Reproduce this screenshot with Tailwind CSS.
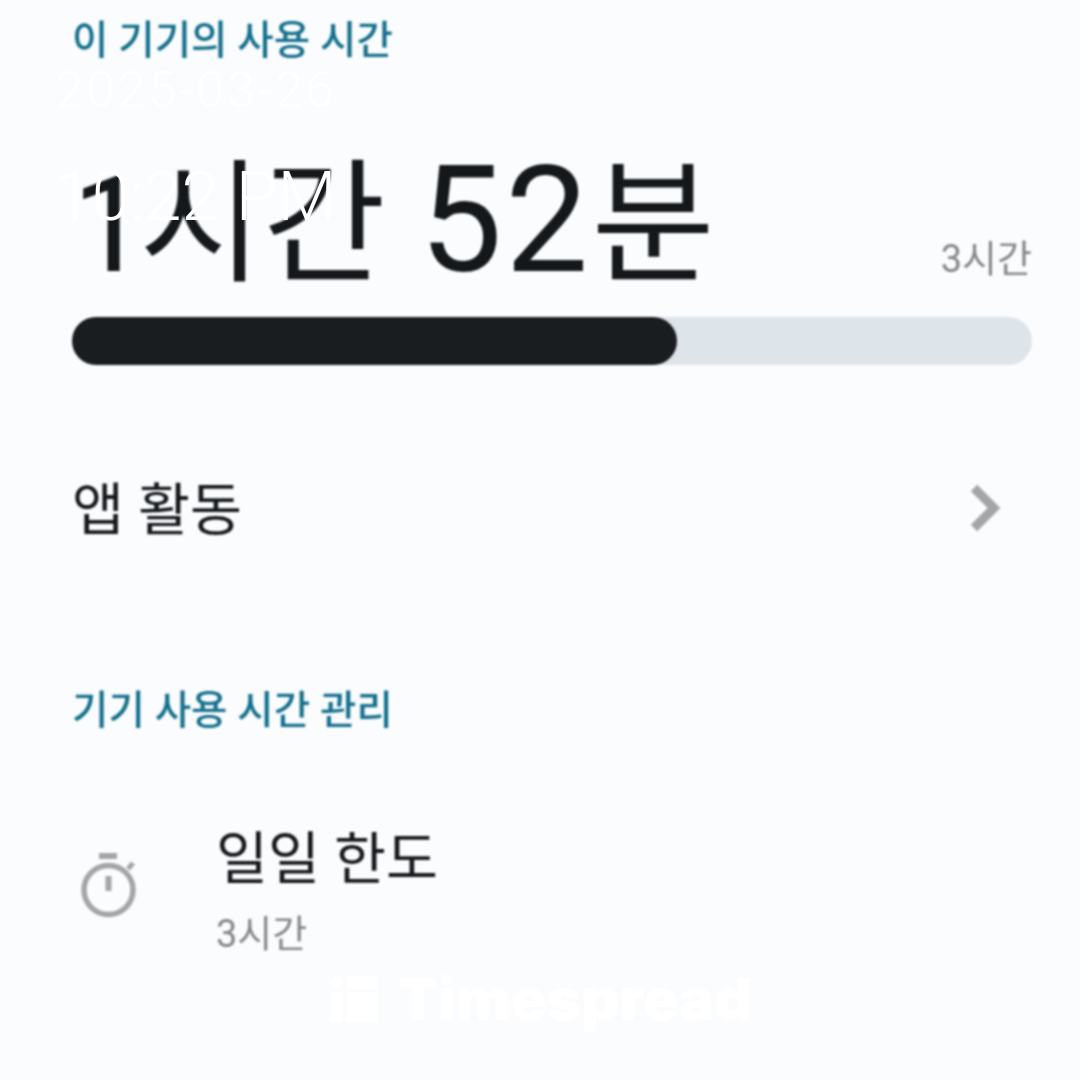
<!DOCTYPE html>
<html lang="ko">
<head>
<meta charset="utf-8">
<script src="https://cdn.jsdelivr.net/npm/@tailwindcss/browser@4"></script>
</head>
<body class="m-0">
<div class="relative w-[1080px] h-[1080px] overflow-hidden bg-[#fbfcfe] font-['Roboto','Noto_Sans_CJK_KR',sans-serif]">
  <div class="pl-[72px] pr-[48px] pt-[11px] flex flex-col blur-[0.8px]">
    <div class="text-[39.6px] leading-[60px] text-[#14708c] font-medium">이 기기의 사용 시간</div>
    <div class="flex justify-between items-end mt-[75px] h-[160px]">
      <div class="text-[134px] leading-[160px] text-[#14181b] whitespace-nowrap"><span class="tracking-[-8px]">1</span>시간 <span class="text-[148px] leading-[100px] tracking-[3px]">52</span>분</div>
      <div class="text-[38px] leading-[50px] text-[#858688] mb-[22px]">3시간</div>
    </div>
    <div class="h-[48px] mt-[11px] rounded-full bg-[#dde4ea]">
      <div class="h-full w-[605px] rounded-full bg-[#191d20]"></div>
    </div>
    <div class="flex justify-between items-center mt-[110px] h-[72px]">
      <div class="text-[56.5px] leading-[72px] text-[#14181b]">앱 활동</div>
      <svg class="w-[34px] h-[48px] mr-[30px] mb-[6px]" viewBox="0 0 34 48" fill="none"><path d="M6 4 L26 24 L6 44" stroke="#a4a5a7" stroke-width="9"/></svg>
    </div>
    <div class="text-[39.6px] leading-[60px] text-[#14708c] font-medium mt-[134px]">기기 사용 시간 관리</div>
    <div class="flex items-center mt-[83px]">
      <svg class="w-[60px] h-[72px] ml-[6px] mb-[9px] shrink-0" viewBox="0 0 60 72" fill="none" stroke="#a4a5a7">
        <circle cx="30.5" cy="39" r="24.5" stroke-width="5.5"/>
        <path d="M21 5 H39" stroke-width="6"/>
        <path d="M30.5 25 V40" stroke-width="6"/>
        <path d="M50 18 L55 12" stroke-width="5"/>
      </svg>
      <div class="ml-[78px] flex flex-col">
        <div class="text-[56.5px] leading-[72px] text-[#14181b]">일일 한도</div>
        <div class="text-[38px] leading-[50px] text-[#858688] mt-[13px]">3시간</div>
      </div>
    </div>
  </div>

  <div class="absolute left-[56px] top-[61px] text-[50px] leading-[58px] tracking-[3px] text-white font-light">2025-03-26</div>
  <div class="absolute left-[54px] top-[162px] text-[68px] leading-[70px] text-white font-light">10:22 PM</div>

  <div class="absolute left-[330px] top-[976px] flex items-start gap-[20px]">
    <svg class="w-[48px] h-[46px]" viewBox="0 0 48 46" fill="#ffffff">
      <circle cx="6.5" cy="6.5" r="6.5"/>
      <rect x="16" y="0" width="31" height="13"/>
      <rect x="0" y="16" width="13" height="30"/>
      <rect x="16" y="16" width="31" height="30"/>
    </svg>
    <div class="text-[58px] leading-[46px] font-black text-white font-['Inter',sans-serif] tracking-[0.5px]">Timespread</div>
  </div>
</div>
</body>
</html>
